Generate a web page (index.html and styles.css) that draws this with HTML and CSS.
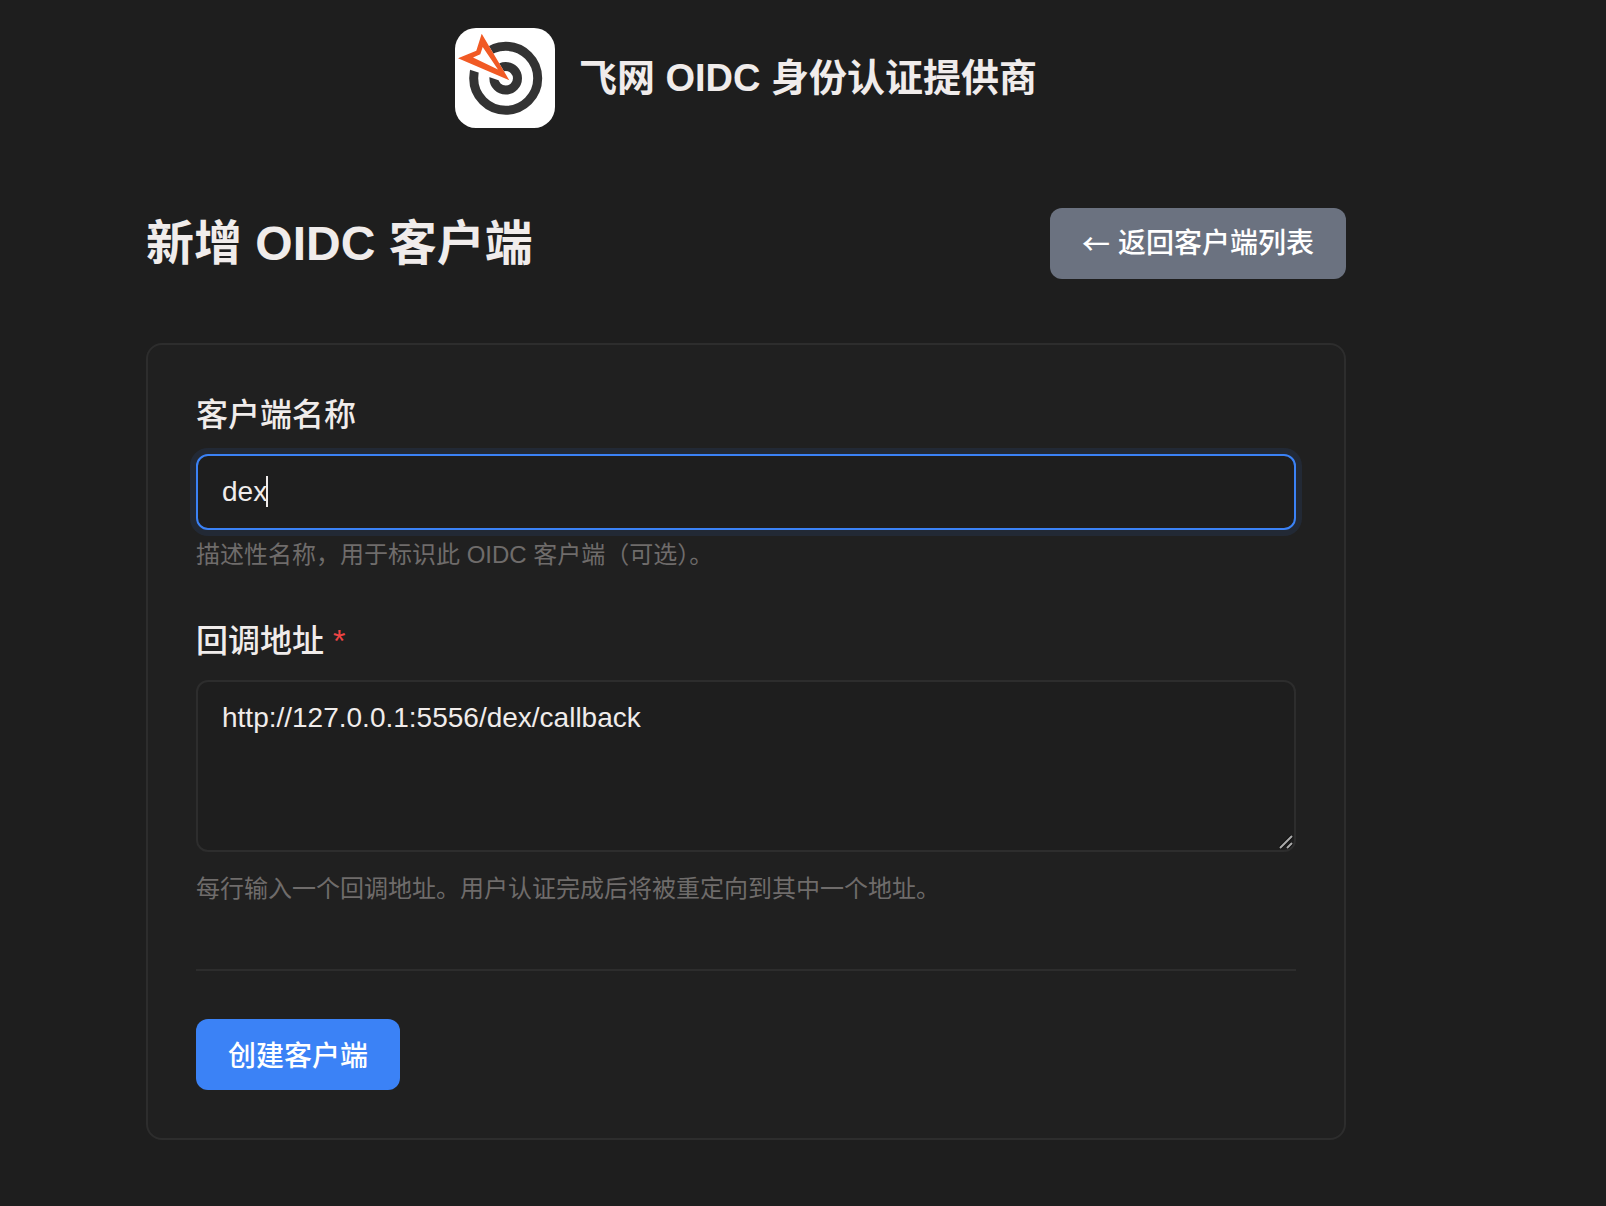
FILE: index.html
```html
<!DOCTYPE html>
<html lang="zh-CN">
<head>
    <meta charset="UTF-8">
    <meta name="viewport" content="width=device-width, initial-scale=1.0">
    <title>新增 OIDC 客户端</title>
    <link rel="stylesheet" href="styles.css">
</head>
<body>
    <div class="container">
        <header class="site-header">
            <svg class="logo" viewBox="0 0 100 100" aria-hidden="true">
                <rect width="100" height="100" rx="21" fill="#fff"/>
                <circle cx="50.7" cy="50.3" r="32" fill="none" stroke="#333" stroke-width="9"/>
                <circle cx="50.7" cy="50.3" r="11.8" fill="none" stroke="#333" stroke-width="9"/>
                <path d="M26.7 5.7L54.3 52.3L45 52.7L34 49L25 45L15.7 42L3 35Z" fill="#fff"/>
                <path fill="#f15a24" fill-rule="evenodd" d="M26.7 5.7L54.3 52.3L3 30.3L21.3 22.7ZM27.7 19L25.3 26.3L18 29.5L43 41.5Z"/>
            </svg>
            <span class="site-title">飞网 OIDC 身份认证提供商</span>
        </header>

        <main>
            <div class="page-header">
                <h1>新增 OIDC 客户端</h1>
                <a href="#" class="btn btn-secondary"><span class="arrow">←</span>返回客户端列表</a>
            </div>

            <form class="card">
                <div class="form-group">
                    <label for="clientName">客户端名称</label>
                    <div class="field">
                        <input type="text" id="clientName" name="clientName" value="dex" autocomplete="off" autofocus>
                        <span class="caret"></span>
                    </div>
                    <p class="hint">描述性名称，用于标识此 OIDC 客户端（可选）。</p>
                </div>

                <div class="form-group">
                    <label for="redirectUris">回调地址 <span class="required">*</span></label>
                    <div class="field">
                        <textarea id="redirectUris" name="redirectUris" spellcheck="false" required>http://127.0.0.1:5556/dex/callback</textarea>
                        <svg class="grip" viewBox="0 0 14 14" aria-hidden="true">
                            <path d="M1 13L13 1M8 13L13 8" fill="none" stroke="#111" stroke-width="4"/>
                            <path d="M1 13L13 1M8 13L13 8" fill="none" stroke="#aaa" stroke-width="2"/>
                        </svg>
                    </div>
                    <p class="hint hint-spaced">每行输入一个回调地址。用户认证完成后将被重定向到其中一个地址。</p>
                </div>

                <div class="form-actions">
                    <button type="submit" class="btn btn-primary">创建客户端</button>
                </div>
            </form>
        </main>
    </div>
</body>
</html>
```
FILE: styles.css
```css
* {
    margin: 0;
    padding: 0;
    box-sizing: border-box;
}

body {
    font-family: "Liberation Sans", "Noto Sans CJK SC", sans-serif;
    background: #1e1e1e;
    color: #f0eceb;
    padding: 28px 114px 28px 0;
}

.container {
    max-width: 1200px;
    margin: 0 auto;
}

.site-header {
    display: flex;
    justify-content: center;
    align-items: center;
    gap: 24px;
    margin-bottom: 80px;
}

.logo {
    width: 100px;
    height: 100px;
}

.site-title {
    padding-bottom: 8px;
    font-size: 38px;
    font-weight: 700;
}

.page-header {
    display: flex;
    justify-content: space-between;
    align-items: center;
    margin-bottom: 64px;
}

h1 {
    font-size: 48px;
    font-weight: 700;
    line-height: 64px;
}

.card {
    background: #202020;
    border: 2px solid #2d2d2d;
    border-radius: 16px;
    padding: 48px;
}

.form-group {
    margin-bottom: 48px;
}

label {
    display: block;
    font-size: 32px;
    font-weight: 500;
    line-height: 45px;
    margin-bottom: 16px;
}

.required {
    color: #ef4444;
}

.field {
    position: relative;
}

input[type="text"], textarea {
    display: block;
    width: 100%;
    padding: 18px 24px;
    background: #1e1e1e;
    border: 2px solid #2d2d2d;
    border-radius: 12px;
    color: #f0eceb;
    font-family: inherit;
    font-size: 28px;
    line-height: 36px;
}

input[type="text"] {
    height: 76px;
    caret-color: transparent;
}

input[type="text"]:focus, textarea:focus {
    border-color: #3b82f6;
    box-shadow: 0 0 0 6px rgba(59, 130, 246, 0.1);
    outline: none;
}

textarea {
    height: 172px;
    resize: none;
}

.caret {
    position: absolute;
    left: 70px;
    top: 22px;
    width: 2px;
    height: 31px;
    background: #f0eceb;
}

.grip {
    position: absolute;
    right: 3px;
    bottom: 3px;
    width: 14px;
    height: 14px;
    pointer-events: none;
}

.hint {
    margin-top: 8px;
    font-size: 24px;
    line-height: 33px;
    color: #6f6c6b;
}

.hint-spaced {
    margin-top: 20px;
}

.form-actions {
    margin-top: 64px;
    padding-top: 48px;
    border-top: 2px solid #2d2d2d;
}

.btn {
    display: inline-flex;
    align-items: center;
    gap: 8px;
    padding: 14px 32px;
    border: none;
    border-radius: 12px;
    color: #fff;
    font-family: inherit;
    font-size: 28px;
    font-weight: 500;
    line-height: 43px;
    text-decoration: none;
    cursor: pointer;
}

.btn-primary {
    padding: 16px 32px 12px;
    background: #3b82f6;
}

.btn-secondary {
    background: #6b7280;
}

.arrow {
    font-family: "Noto Sans CJK SC", sans-serif;
}
```
